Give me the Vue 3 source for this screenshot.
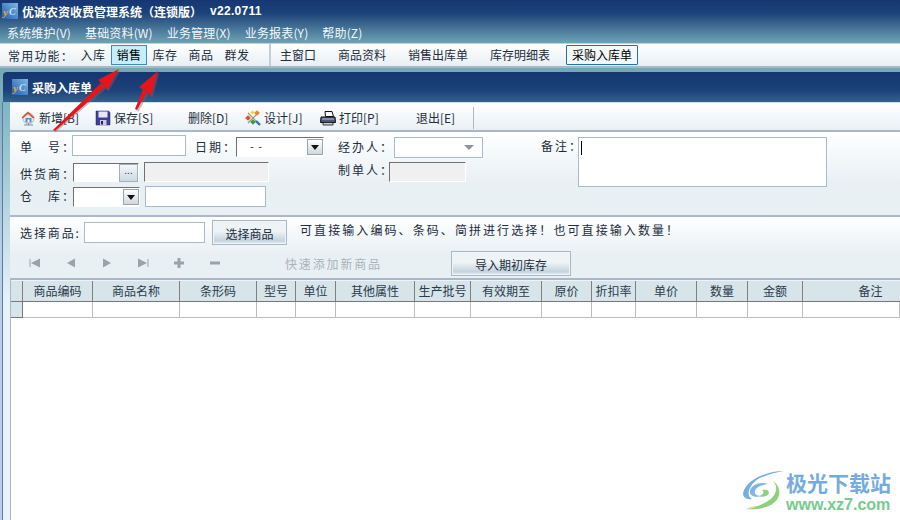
<script setup>
const columns = [
  { label: '商品编码', width: 70 },
  { label: '商品名称', width: 87 },
  { label: '条形码', width: 77 },
  { label: '型号', width: 39 },
  { label: '单位', width: 40 },
  { label: '其他属性', width: 79 },
  { label: '生产批号', width: 56 },
  { label: '有效期至', width: 71 },
  { label: '原价', width: 50 },
  { label: '折扣率', width: 44 },
  { label: '单价', width: 61 },
  { label: '数量', width: 51 },
  { label: '金额', width: 55 },
  { label: '备注', width: 97 },
]
const menus = ['系统维护(V)', '基础资料(W)', '业务管理(X)', '业务报表(Y)', '帮助(Z)']
const quick = ['入库', '销售', '库存', '商品', '群发']
const tabs = ['主窗口', '商品资料', '销售出库单', '库存明细表', '采购入库单']
</script>

<template>
  <div class="app">
    <header class="top">
      <div class="title">
        <svg class="logo" viewBox="0 0 16 16">
          <defs>
            <linearGradient id="logoBg" x1="0" y1="1" x2="1" y2="0">
              <stop offset="0" stop-color="#1f5fb0" />
              <stop offset="1" stop-color="#7fb6e0" />
            </linearGradient>
          </defs>
          <rect width="16" height="16" fill="url(#logoBg)" />
          <text x="1" y="13" class="logo-y">y</text>
          <text x="7" y="12" class="logo-c">C</text>
        </svg>
        <span class="app-name">优诚农资收费管理系统（连锁版）</span>
        <span class="version">v22.0711</span>
      </div>
      <nav class="menu">
        <span v-for="m in menus" :key="m">{{ m }}</span>
      </nav>
    </header>

    <div class="quickbar">
      <div class="quick">
        <span class="quick-label">常用功能：</span>
        <span v-for="q in quick" :key="q" class="quick-item" :class="{ active: q === '销售' }">{{ q }}</span>
      </div>
      <div class="tabs">
        <span v-for="t in tabs" :key="t" class="tab" :class="{ current: t === '采购入库单' }">{{ t }}</span>
      </div>
    </div>

    <section class="window">
      <div class="win-title">
        <svg class="logo" viewBox="0 0 16 16">
          <rect width="16" height="16" fill="url(#logoBg)" />
          <text x="1" y="13" class="logo-y">y</text>
          <text x="7" y="12" class="logo-c">C</text>
        </svg>
        <span>采购入库单</span>
      </div>
      <div class="win-body">
        <div class="toolbar">
          <span class="tool t-new">
            <svg viewBox="0 0 16 16" class="ico"><circle cx="8.500" cy="8.500" r="5.500" fill="#e4ebf2" stroke="#8a9bb0" stroke-width=".6" /><path d="M1.500 7.500 8 1.500l6.500 6-1.300 1L8 4 2.800 8.500z" fill="#d9532c" /><path d="M5.500 8h6v4.500h-6z" fill="#4f8fd6" /><path d="M7.500 9.500h2v3h-2z" fill="#fff" /><path d="M4 15h9M8.500 13v2" stroke="#7d8da0" /></svg>
            新增[B]
          </span>
          <span class="tool t-save">
            <svg viewBox="0 0 16 16" class="ico"><path d="M1 1h12.500L15 2.500V15H1z" fill="#3e3f9c" stroke="#23245f" stroke-width=".5" /><path d="M3.500 1.500h9v6h-9z" fill="#e6e8f5" /><path d="M5 10h6.500v5H5z" fill="#c9cbd6" /><path d="M6 11h2v3.500H6z" fill="#23245f" /></svg>
            保存[S]
          </span>
          <span class="tool t-del">删除[D]</span>
          <span class="tool t-design">
            <svg viewBox="0 0 16 16" class="ico"><path d="M3 13 13 3M3 3l10 10" stroke="#9a9a70" stroke-width="1.200" /><rect x="1" y="6" width="4" height="4" fill="#d6542c" transform="rotate(45 3 8)" /><rect x="10" y="1" width="4" height="4" fill="#e8862f" transform="rotate(45 12 3)" /><rect x="6" y="10" width="4" height="4" fill="#3f9a46" transform="rotate(45 8 12)" /><path d="m11 11 4 4" stroke="#3a6fc4" stroke-width="2.400" /><rect x="6" y="1" width="3" height="3" fill="#e9d44a" transform="rotate(45 7.500 2.500)" /></svg>
            设计[J]
          </span>
          <span class="tool t-print">
            <svg viewBox="0 0 16 16" class="ico"><path d="M5 1.500h7l1.500 5h-8z" fill="#fff" stroke="#111" /><path d="M1 7h14l.5 5.500H.5z" fill="#4c5a76" stroke="#111" /><path d="M3 12.500h10V15H3z" fill="#c9ced8" stroke="#111" stroke-width=".8" /><path d="M2 9h12" stroke="#b8c2d6" /></svg>
            打印[P]
          </span>
          <span class="tool t-exit">退出[E]</span>
          <i class="tool-sep"></i>
        </div>

        <div class="form">
          <div class="form-left">
            <div class="f-row r1">
              <label class="lbl">单　号：</label>
              <div class="box i-no"></div>
              <label class="lbl date-lbl">日期：</label>
              <div class="sunken i-date"><span class="dash">- -</span><b class="drop"></b></div>
            </div>
            <div class="f-row r2">
              <label class="lbl">供货商：</label>
              <div class="sunken i-sup"><b class="dots">...</b></div>
              <div class="sunken i-supname"></div>
            </div>
            <div class="f-row r3">
              <label class="lbl">仓　库：</label>
              <div class="sunken i-wh"><b class="drop"></b></div>
              <div class="box i-whname"></div>
            </div>
          </div>
          <div class="form-mid">
            <div class="f-row m1">
              <label class="lbl">经办人：</label>
              <div class="box i-agent"><i class="flat-arrow"></i></div>
            </div>
            <div class="f-row m2">
              <label class="lbl">制单人：</label>
              <div class="sunken i-maker"></div>
            </div>
          </div>
          <div class="form-right">
            <label class="lbl">备注：</label>
            <div class="box i-note"><i class="caret"></i></div>
          </div>
        </div>

        <div class="picker">
          <div class="f-row p1">
            <label class="lbl">选择商品:</label>
            <div class="box i-pick"></div>
            <span class="btn b-pick">选择商品</span>
            <span class="hint">可直接输入编码、条码、简拼进行选择！也可直接输入数量！</span>
          </div>
          <div class="f-row p2">
            <div class="nav">
              <svg viewBox="0 0 12 10"><path d="M1 1v8" stroke="#9aa3aa" /><path d="M11 .5v9L2 5z" fill="#9aa3aa" /></svg>
              <svg viewBox="0 0 12 10"><path d="M10 .5v9L2 5z" fill="#9aa3aa" /></svg>
              <svg viewBox="0 0 12 10"><path d="M2 .5v9L10 5z" fill="#9aa3aa" /></svg>
              <svg viewBox="0 0 12 10"><path d="M11 1v8" stroke="#9aa3aa" /><path d="M1 .5v9L10 5z" fill="#9aa3aa" /></svg>
              <svg viewBox="0 0 12 10"><path d="M4.500 0h3v3.500H11v3H7.500V10h-3V6.500H1v-3h3.500z" fill="#9aa3aa" /></svg>
              <svg viewBox="0 0 12 10"><path d="M1 3.500h10v3H1z" fill="#9aa3aa" /></svg>
            </div>
            <span class="quick-add">快速添加新商品</span>
            <span class="btn b-import">导入期初库存</span>
          </div>
        </div>

        <div class="grid">
          <div class="g-row g-head">
            <span class="g-corner"></span>
            <span v-for="c in columns" :key="c.label" class="g-cell" :style="{ width: c.width + 'px' }">{{ c.label }}</span>
          </div>
          <div class="g-row g-data">
            <span class="g-corner"></span>
            <span v-for="c in columns" :key="c.label" class="g-cell" :style="{ width: c.width + 'px' }"></span>
          </div>
        </div>
      </div>
    </section>

    <!-- annotation arrows drawn on top of the screenshot -->
    <svg class="arrows" viewBox="0 0 900 520">
      <g fill="#7a6a6a" opacity=".4" transform="translate(1.500 1.500)">
        <path d="M53 130 103 82 106 86 54 131z" />
        <path d="M119 69 98 80 107 90z" />
        <path d="M135 109 144 89 148 91 137 110z" />
        <path d="M158 71 139 87 151 96z" />
      </g>
      <g fill="#e8141c">
        <path d="M53 130 101 83 105 87 55 131z" />
        <path d="M119 69 98 80 103 84 107 90z" />
        <path d="M135 109 143 89 147 92 137 110z" />
        <path d="M158 71 139 87 145 90 151 96z" />
      </g>
    </svg>

    <div class="watermark">
      <svg viewBox="0 0 46 44" class="wm-logo">
        <path d="M44 3C28 3 10 10 4 22c-3 7 2 10 8 9C6 28 8 18 18 11 26 7 36 4 44 3z" fill="#74aee2" />
        <path d="M28 16c-8-3-17 1-18 7-1 5 6 7 11 5-4 0-7-2-6-5 1-4 7-6 13-7z" fill="#7fb5e6" />
        <path d="M33 13c6 6 3 15-5 20-5 3-9 5-14 6l-8 2c12 1 26-1 32-11 3-6 1-13-5-17z" fill="#8fd07d" />
        <path d="M6 41c4 0 7-1 10-2l-2-1c-3 1-6 2-8 3z" fill="#e8e08a" />
        <path d="M22 22c3 2 1 6-4 6 5 2 10 0 11-3 0-3-3-4-7-3z" fill="#8fd07d" />
      </svg>
      <div class="wm-text">
        <span class="wm-cn">极光下载站</span>
        <span class="wm-url">www.xz7.com</span>
      </div>
    </div>
  </div>
</template>

<style scoped>
.app {
  position: relative;
  width: 900px;
  height: 520px;
  overflow: hidden;
  font-family: "Noto Sans CJK SC", "Liberation Sans", sans-serif;
  font-size: 12px;
  color: #222c3c;
  background: #fff;
}
.top {
  height: 43px;
  background: linear-gradient(#153672 0, #1c4279 30%, #6ea3b3 100%);
  color: #fff;
}
.title {
  display: flex;
  align-items: center;
  height: 22px;
  padding-left: 2px;
  font-weight: 700;
}
.logo {
  width: 16px;
  height: 16px;
  flex: none;
}
.logo-y {
  font: italic 700 11px "Liberation Serif", serif;
  fill: #f0a030;
}
.logo-c {
  font: italic 700 10px "Liberation Serif", serif;
  fill: #bfe3f2;
}
.app-name {
  margin-left: 4px;
  white-space: nowrap;
}
.version {
  margin-left: 8px;
  font-family: "Liberation Sans", sans-serif;
  letter-spacing: .3px;
}
.menu {
  display: flex;
  gap: 14px;
  height: 21px;
  align-items: center;
  padding-left: 7px;
  letter-spacing: .15px;
  color: #f4f8fb;
}
.quickbar {
  display: flex;
  height: 25px;
  box-sizing: border-box;
  background: linear-gradient(#fff, #e8eff4);
  border-top: 1px solid #c3d0d8;
  border-bottom: 2px solid #a9b8c9;
}
.quick {
  display: flex;
  align-items: center;
  width: 271px;
  padding-left: 8px;
  box-sizing: border-box;
  border-right: 2px solid #c3ced8;
}
.quick-label {
  width: 67px;
  letter-spacing: 1.200px;
}
.quick-item {
  width: 36px;
  text-align: center;
  line-height: 18px;
  letter-spacing: .4px;
}
.quick-item.active {
  background: #c6edf8;
  border: 1px solid #3f86c4;
  box-sizing: border-box;
  color: #000;
}
.tabs {
  display: flex;
  align-items: center;
  padding-left: 9px;
}
.tab {
  line-height: 18px;
  margin-right: 22px;
}
.tab.current {
  margin-left: -6px;
  margin-right: 0;
  border: 1px solid #1f6fbf;
  border-radius: 1px;
  padding: 0 5px;
  color: #000;
  background: #f5f8fa;
}
.window {
  display: flex;
  flex-direction: column;
  height: 452px;
  padding-top: 4px;
  box-sizing: border-box;
  background: linear-gradient(#74a8b4, #b9d0e0 40%);
}
.win-title {
  display: flex;
  align-items: center;
  gap: 4px;
  height: 30px;
  flex: none;
  margin-left: 3px;
  padding-left: 9px;
  border-radius: 4px 0 0 0;
  background: linear-gradient(#153672 0, #1c4279 60%, #33608c 100%);
  color: #fff;
  font-weight: 700;
}
.win-body {
  flex: 1;
  display: flex;
  flex-direction: column;
  margin-left: 2px;
  padding-left: 7px;
  border-left: 1px solid #5a78b8;
  background: linear-gradient(#7fb4c0, #e8f3f8 48%);
}
.toolbar {
  display: flex;
  align-items: center;
  height: 28px;
  flex: none;
  padding: 2px 0 0 10px;
  background: linear-gradient(#fff, #e9f0f4);
  border-top: 1px solid #d5dee5;
  box-sizing: border-box;
}
.tool {
  display: inline-flex;
  align-items: center;
  gap: 3px;
  white-space: nowrap;
}
.ico {
  width: 16px;
  height: 16px;
  flex: none;
}
.t-new { width: 75px; }
.t-save { width: 93px; }
.t-del { width: 57px; }
.t-design { width: 75px; }
.t-print { width: 96px; }
.t-exit { width: 57px; }
.tool-sep {
  width: 1px;
  height: 22px;
  background: #aeb8c0;
}
.form {
  display: flex;
  height: 87px;
  flex: none;
  box-sizing: border-box;
  padding-left: 10px;
  border-top: 2px solid #a9b8c9;
  border-bottom: 2px solid #a9b8c9;
  background: linear-gradient(#fff, #e9f0f4 60%);
}
.lbl {
  white-space: nowrap;
  letter-spacing: 2px;
  color: #222c3c;
}
.f-row {
  display: flex;
  align-items: center;
}
.box {
  background: #fff;
  border: 1px solid #a9bacd;
  box-sizing: border-box;
}
.sunken {
  position: relative;
  box-sizing: border-box;
  background: #fff;
  border: 1px solid #fff;
  border-top: 1px solid #707070;
  border-left: 1px solid #707070;
}
.form-left { width: 318px; }
.r1 { margin-top: 3px; height: 21px; }
.r2 { margin-top: 6px; height: 20px; }
.r3 { margin-top: 4px; height: 21px; }
.form-left .lbl { width: 52px; line-height: 18px; }
.r1 .lbl { margin-top: 2px; }
.r2 .lbl { margin-top: 3px; }
.r3 .lbl { margin-top: -1px; }
.i-no { width: 114px; height: 21px; }
.form-left .date-lbl { width: 41px; margin-left: 9px; }
.i-date { width: 88px; height: 20px; margin-top: 2px; }
.dash {
  position: absolute;
  left: 13px;
  top: 0;
  line-height: 17px;
  font-size: 11px;
  letter-spacing: 1px;
}
.drop {
  position: absolute;
  right: 0;
  top: 1px;
  width: 16px;
  height: 16px;
  box-sizing: border-box;
  background: linear-gradient(#fff, #cfd8de);
  border: 1px solid #9aa4ac;
}
.drop::after {
  content: "";
  position: absolute;
  left: 3px;
  top: 5px;
  border: 4px solid transparent;
  border-top: 5px solid #111;
  border-bottom: 0;
}
.i-sup { width: 66px; height: 19px; margin-left: 1px; }
.dots {
  position: absolute;
  right: 0;
  top: 0;
  width: 19px;
  height: 18px;
  border: 1px solid #9fb0c4;
  box-sizing: border-box;
  background: linear-gradient(#f4f7fa, #cdd9e3);
  font: 400 10px/12px "Liberation Sans", sans-serif;
  text-align: center;
}
.i-supname { width: 125px; height: 20px; margin-left: 5px; background: #f0f0f0; }
.i-wh { width: 67px; height: 20px; margin-left: 1px; }
.i-whname { width: 121px; height: 21px; margin-left: 5px; }
.form-mid { width: 203px; }
.m1 { margin-top: 5px; height: 21px; }
.m2 { margin-top: 4px; height: 20px; }
.form-mid .lbl { width: 56px; line-height: 18px; }
.m1 .lbl { margin-top: -2px; }
.m2 .lbl { margin-top: -4px; width: 51px; }
.i-agent { position: relative; width: 89px; height: 21px; }
.i-maker { width: 77px; height: 20px; background: #f0f0f0; }
.flat-arrow {
  position: absolute;
  right: 8px;
  top: 7px;
  border: 5px solid transparent;
  border-top: 5px solid #8b959c;
  border-bottom: 0;
}
.form-right {
  display: flex;
  align-items: flex-start;
  padding-top: 5px;
}
.form-right .lbl { width: 37px; line-height: 18px; }
.i-note { position: relative; width: 249px; height: 50px; }
.caret {
  position: absolute;
  left: 2px;
  top: 3px;
  width: 1px;
  height: 14px;
  background: #000;
}
.picker {
  height: 63px;
  flex: none;
  box-sizing: border-box;
  padding: 1px 0 0 10px;
  border-bottom: 2px solid #a9b8c9;
  background: linear-gradient(#fff, #e9f0f4 60%);
}
.p1 { height: 28px; }
.p1 .lbl { width: 64px; letter-spacing: 1.900px; }
.i-pick { width: 121px; height: 21px; }
.btn {
  box-sizing: border-box;
  text-align: center;
  border: 1px solid #a9b8c9;
  outline: 1px solid #f2f5f8;
  outline-offset: -2px;
  background: linear-gradient(#eef3f6 0, #eef3f6 45%, #c5d4df 85%, #e4ebf0 100%);
}
.b-pick {
  width: 75px;
  height: 25px;
  line-height: 25px;
  margin-left: 7px;
}
.hint {
  margin-left: 13px;
  letter-spacing: 2.080px;
  margin-top: -5px;
  white-space: nowrap;
}
.p2 { height: 26px; margin-top: 4px; }
.nav {
  display: flex;
  gap: 24px;
  width: 265px;
  padding-left: 9px;
  box-sizing: border-box;
}
.nav svg {
  width: 12px;
  height: 10px;
}
.quick-add {
  width: 166px;
  color: #a9b3bb;
  letter-spacing: 1.850px;
  white-space: nowrap;
}
.b-import {
  width: 120px;
  height: 25px;
  line-height: 25px;
}
.grid {
  flex: 1;
  background: #fff;
  border-left: 1px solid #a9b8c9;
}
.g-row {
  display: flex;
}
.g-corner {
  flex: none;
  width: 12px;
  background: #d7e5eb;
  border-right: 1px solid #808080;
  box-sizing: border-box;
}
.g-head {
  height: 22px;
  background: #d7e5eb;
  border-top: 1px solid #eef3f5;
  border-bottom: 1px solid #777;
  box-sizing: border-box;
}
.g-head .g-cell {
  text-align: center;
  line-height: 20px;
  border-right: 1px solid #808080;
  color: #2a3a4a;
}
.g-head .g-cell:last-child {
  padding-left: 38px;
  border-right: 0;
}
.g-data {
  height: 16px;
}
.g-data .g-corner {
  border-bottom: 1px solid #777;
  border-right-color: #777;
}
.g-data .g-cell {
  border-right: 1px solid #bdbdbd;
  border-bottom: 1px solid #bdbdbd;
}
.g-cell {
  flex: none;
  box-sizing: border-box;
  white-space: nowrap;
  overflow: hidden;
}
.arrows {
  position: absolute;
  inset: 0;
  width: 900px;
  height: 520px;
  pointer-events: none;
}
.watermark {
  position: absolute;
  left: 740px;
  top: 468px;
  display: flex;
}
.wm-logo {
  width: 46px;
  height: 44px;
  flex: none;
}
.wm-text {
  display: flex;
  flex-direction: column;
  margin-top: 2px;
}
.wm-cn {
  font-size: 21px;
  line-height: 24px;
  font-weight: 700;
  color: #74acdf;
}
.wm-url {
  font: 700 16px/21px "Liberation Sans", sans-serif;
  color: #74cc8c;
}
</style>
